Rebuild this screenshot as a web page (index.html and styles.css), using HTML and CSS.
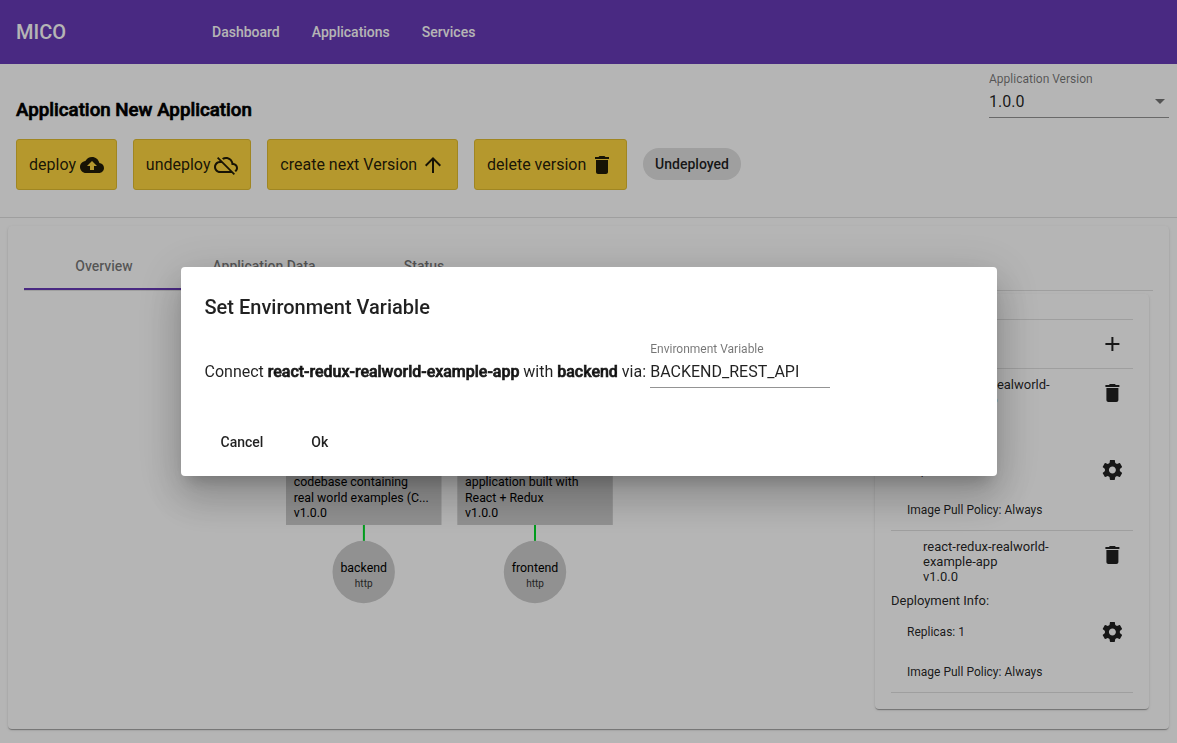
FILE: index.html
```html
<!DOCTYPE html>
<html lang="en">
<head>
<meta charset="utf-8">
<title>MICO</title>
<link rel="stylesheet" href="styles.css">
</head>
<body>
<svg class="defs" width="0" height="0">
  <symbol id="trash" viewBox="0 0 24 24"><path d="M6 19c0 1.1.9 2 2 2h8c1.1 0 2-.9 2-2V7H6v12zM19 4h-3.500l-1-1h-5l-1 1H5v2h14V4z"/></symbol>
  <symbol id="gear" viewBox="0 0 24 24"><path d="M19.430 12.980c.04-.32.07-.64.07-.98s-.03-.66-.07-.98l2.110-1.650c.19-.15.24-.42.12-.64l-2-3.460c-.12-.22-.39-.3-.61-.22l-2.490 1c-.52-.4-1.080-.73-1.690-.98l-.38-2.650C14.460 2.180 14.250 2 14 2h-4c-.25 0-.46.18-.49.42l-.38 2.650c-.61.25-1.170.59-1.690.98l-2.490-1c-.23-.09-.49 0-.61.22l-2 3.460c-.13.22-.07.49.12.64l2.110 1.650c-.04.32-.07.65-.07.98s.03.66.07.98l-2.110 1.650c-.19.15-.24.42-.12.64l2 3.460c.12.22.39.3.61.22l2.490-1c.52.4 1.080.73 1.690.98l.38 2.650c.03.24.24.42.49.42h4c.25 0 .46-.18.49-.42l.38-2.650c.61-.25 1.170-.59 1.690-.98l2.490 1c.23.09.49 0 .61-.22l2-3.460c.12-.22.07-.49-.12-.64l-2.110-1.650zM12 15.500c-1.930 0-3.500-1.570-3.500-3.500s1.570-3.500 3.500-3.500 3.500 1.570 3.500 3.500-1.570 3.500-3.500 3.500z"/></symbol>
</svg>

<header class="toolbar">
  <span class="brand">MICO</span>
  <nav class="nav"><a>Dashboard</a><a>Applications</a><a>Services</a></nav>
</header>

<section class="app-header">
  <div class="app-main">
    <h3 class="app-title">Application New Application</h3>
    <div class="actions">
      <button class="action">deploy <svg class="icon" viewBox="0 0 24 24"><path d="M19.350 10.040C18.670 6.590 15.640 4 12 4 9.110 4 6.600 5.640 5.350 8.040 2.340 8.360 0 10.910 0 14c0 3.310 2.690 6 6 6h13c2.760 0 5-2.240 5-5 0-2.640-2.050-4.780-4.650-4.960zM14 13v4h-4v-4H7l5-5 5 5h-3z"/></svg></button>
      <button class="action">undeploy <svg class="icon" viewBox="0 0 24 24"><path d="M19.350 10.040C18.670 6.590 15.640 4 12 4c-1.480 0-2.850.43-4.010 1.170l1.460 1.460C10.210 6.230 11.080 6 12 6c3.040 0 5.500 2.460 5.500 5.500v.5H19c1.660 0 3 1.340 3 3 0 1.130-.64 2.110-1.560 2.620l1.450 1.450C23.160 18.160 24 16.680 24 15c0-2.640-2.050-4.780-4.650-4.960zM3 5.270l2.750 2.740C2.560 8.150 0 10.770 0 14c0 3.310 2.690 6 6 6h11.730l2 2L21 20.730 4.270 4 3 5.270zM7.730 10l8 8H6c-2.210 0-4-1.790-4-4s1.790-4 4-4h1.730z"/></svg></button>
      <button class="action">create next Version <svg class="icon" viewBox="0 0 24 24"><path d="M4 12l1.410 1.410L11 7.830V20h2V7.830l5.580 5.590L20 12l-8-8-8 8z"/></svg></button>
      <button class="action">delete version <svg class="icon"><use href="#trash"/></svg></button>
      <span class="chip">Undeployed</span>
    </div>
  </div>
  <div class="field version">
    <span class="field-label">Application Version</span>
    <span class="field-value">1.0.0 <i class="caret"></i></span>
  </div>
</section>

<main class="card page-card">
  <div class="tabs">
    <span class="tab active">Overview</span><span class="tab">Application Data</span><span class="tab">Status</span>
  </div>
  <div class="overview">
    <svg class="graph" width="851" height="418" viewBox="24 291 851 418">
      <g class="service">
        <rect x="286" y="420" width="155.500" height="105"/>
        <text x="293.700" y="486">codebase containing</text>
        <text x="293.700" y="501.500">real world examples (C...</text>
        <text x="293.700" y="517">v1.0.0</text>
        <rect x="457.300" y="420" width="155.500" height="105"/>
        <text x="465" y="486">application built with</text>
        <text x="465" y="501.500">React + Redux</text>
        <text x="465" y="517">v1.0.0</text>
      </g>
      <path class="edge" d="M363.900 525v16M535 525v16"/>
      <g class="port">
        <circle cx="363.700" cy="572" r="31.200"/>
        <text x="363.700" y="572">backend</text>
        <text class="proto" x="363.700" y="587">http</text>
        <circle cx="535" cy="572" r="31.200"/>
        <text x="535" y="572">frontend</text>
        <text class="proto" x="535" y="587">http</text>
      </g>
    </svg>
    <aside class="card side">
      <div class="add-row"><svg class="icon" viewBox="0 0 24 24"><path d="M19 13h-6v6h-2v-6H5v-2h6V5h2v6h6v2z"/></svg></div>
      <article class="item">
        <div class="item-head"><p class="item-name">spring-boot-realworld-<br>example-app<br>v1.0.0</p><svg class="icon"><use href="#trash"/></svg></div>
        <p class="info">Deployment Info:</p>
        <div class="detail"><span>Replicas: 1</span><svg class="icon"><use href="#gear"/></svg></div>
        <div class="detail"><span>Image Pull Policy: Always</span></div>
      </article>
      <article class="item">
        <div class="item-head"><p class="item-name">react-redux-realworld-<br>example-app<br>v1.0.0</p><svg class="icon"><use href="#trash"/></svg></div>
        <p class="info">Deployment Info:</p>
        <div class="detail"><span>Replicas: 1</span><svg class="icon"><use href="#gear"/></svg></div>
        <div class="detail"><span>Image Pull Policy: Always</span></div>
      </article>
    </aside>
  </div>
</main>

<div class="backdrop">
  <div class="dialog" role="dialog">
    <h2 class="dialog-title">Set Environment Variable</h2>
    <div class="dialog-body">
      <span class="sentence">Connect <b>react-redux-realworld-example-app</b> with <b>backend</b> via:</span>
      <div class="field">
        <span class="field-label">Environment Variable</span>
        <span class="field-value">BACKEND_REST_API</span>
      </div>
    </div>
    <div class="dialog-actions"><button class="flat">Cancel</button><button class="flat">Ok</button></div>
  </div>
</div>
</body>
</html>
```
FILE: styles.css
```css
* { box-sizing: border-box; }
body {
  margin: 0;
  height: 743px;
  overflow: hidden;
  background: #fff;
  color: rgba(0, 0, 0, .87);
  font-family: Roboto, "Liberation Sans", sans-serif;
  font-size: 16px;
}
h2, h3, p { margin: 0; }
button { font-family: inherit; color: inherit; }
.defs { position: absolute; }
.icon { width: 24px; height: 24px; fill: currentColor; flex: none; }

.toolbar { display: flex; align-items: center; height: 64px; padding: 0 16px; background: #673ab7; color: #fff; }
.brand { width: 196px; font-size: 20px; font-weight: 500; }
.nav { display: flex; gap: 32px; font-size: 14px; font-weight: 500; }

.app-header { display: flex; justify-content: space-between; height: 154px; padding: 0 8px 0 16px; border-bottom: 1px solid #e0e0e0; }
.app-main { padding-top: 35px; }
.app-title { font-size: 18.72px; line-height: 22px; font-weight: 500; color: #000; -webkit-text-stroke: .65px #000; }
.actions { display: flex; align-items: center; gap: 16px; margin-top: 18px; }
.action { display: flex; align-items: center; gap: 3.87px; height: 51px; padding: 0 12px; border: 1px solid #e2bd30; border-radius: 3px; background: #ffd740; font-size: 16px; white-space: nowrap; }
.chip { height: 32px; margin-bottom: 1px; padding: 0 12px; border-radius: 16px; background: #e0e0e0; font-size: 14px; line-height: 32px; font-weight: 500; }

.field { display: flex; flex-direction: column; width: 180px; height: 47px; border-bottom: 1px solid rgba(0, 0, 0, .42); }
.field-label { font-size: 12px; line-height: 14px; color: rgba(0, 0, 0, .54); }
.field-value { display: flex; justify-content: space-between; align-items: center; margin-top: 7px; line-height: 18px; }
.version { margin-top: 8px; height: 46px; }
.caret { margin: -2px 4px 0 0; border: 5px solid transparent; border-top-color: rgba(0, 0, 0, .54); border-bottom: 0; }

.card { border-radius: 4px; background: #fff; box-shadow: 0 2px 1px -1px rgba(0,0,0,.2), 0 1px 1px 0 rgba(0,0,0,.14), 0 1px 3px 0 rgba(0,0,0,.12); }
.page-card { margin: 8px 8px 0; height: 503px; padding: 16px; }
.tabs { display: flex; height: 49px; border-bottom: 1px solid #e0e0e0; }
.tab { width: 160px; height: 48px; line-height: 48px; text-align: center; font-size: 14px; font-weight: 500; color: rgba(0, 0, 0, .54); }
.active { border-bottom: 2px solid #673ab7; }
.overview { display: flex; }
.graph { flex: none; font-size: 12.35px; }
.service rect, .port circle { fill: #ccc; }
.edge { stroke: #00dc28; stroke-width: 2; }
.port { text-anchor: middle; }
.proto { font-size: 10px; fill: #333; }

.side { width: 274px; height: 415px; margin-top: 3px; padding: 25px 16px 0; }
.side .icon { transform: translateX(.4px); }
.add-row { display: flex; justify-content: flex-end; align-items: center; height: 50px; padding-right: 9px; border: 1px solid #e0e0e0; border-width: 1px 0; }
.item { height: 162px; padding-top: 8px; border-bottom: 1px solid #e0e0e0; }
.item-head { display: flex; justify-content: space-between; padding: 0 9px 0 32px; }
.item-head .icon { margin-top: 4px; }
.item-name { font-size: 13px; line-height: 15px; }
.info { margin-top: 9px; font-size: 13px; line-height: 16px; }
.detail { display: flex; justify-content: space-between; align-items: center; height: 40px; margin-top: 3px; padding: 0 9px 0 16px; font-size: 12px; }
.detail + .detail { margin-top: 0; }

.backdrop { position: fixed; inset: 0; display: flex; align-items: center; justify-content: center; background: rgba(0, 0, 0, .29); }
.dialog { width: 816px; height: 209px; padding: 24px; border-radius: 4px; background: #fff; box-shadow: 0 11px 15px -7px rgba(0,0,0,.2), 0 24px 38px 3px rgba(0,0,0,.14), 0 9px 46px 8px rgba(0,0,0,.12); }
.dialog-title { font-size: 20px; line-height: 32px; font-weight: 500; }
.dialog-body { display: flex; gap: 4.2px; margin-top: 19px; }
.dialog-body .field { height: 46px; }
.sentence { padding-top: 20px; line-height: 19px; }
.sentence b { font-weight: 500; letter-spacing: -.015px; -webkit-text-stroke: .65px currentColor; }
.dialog-actions { display: flex; gap: 16px; margin-top: 36px; }
.flat { height: 36px; padding: 0 16px; border: 0; background: none; font-size: 14px; font-weight: 500; }
```
